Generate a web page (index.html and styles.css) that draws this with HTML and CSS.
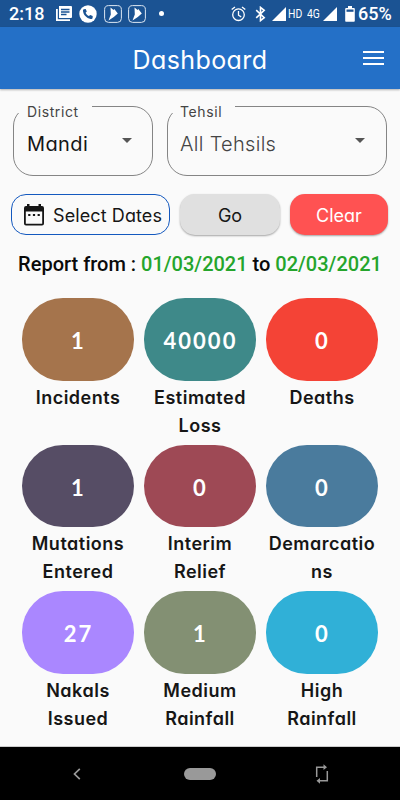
FILE: index.html
```html
<!DOCTYPE html>
<html lang="en">
  <head>
    <meta charset="utf-8">
    <title>Dashboard</title>
    <link rel="stylesheet" href="styles.css">
  </head>

  <body>
    <!-- status bar -->
    <div class="status">
      <span class="time">2:18</span>
      <svg class="news" width="16" height="16" viewBox="0 0 16 16">
        <path fill="#fff" d="M3 0h12a1 1 0 0 1 1 1v10a1 1 0 0 1-1 1H3z"/>
        <path fill="none" stroke="#fff" stroke-width="1.8" d="M.9 3v11.1H14"/>
        <path stroke="#1b5393" stroke-width="1.3" d="M5 3.500h8.500M5 6h8.500M5 8.500h5.500"/>
      </svg>
      <svg class="phone" width="18" height="18" viewBox="0 0 18 18">
        <circle cx="9" cy="9" r="8.700" fill="#fff"/>
        <path fill="#1b5393" d="M4.800 4.200l1.900-.3 1.100 2.600-1.200 1.200c.7 1.500 1.800 2.600 3.300 3.400l1.300-1.200 2.500 1.100-.1 1.900c-.2.900-1.200 1.200-2 1C7.500 13.200 4.300 9.700 4 6c-.1-.8.100-1.600.8-1.800z"/>
      </svg>
      <svg class="app" width="18" height="18" viewBox="0 0 18 18">
        <rect x=".6" y=".6" width="16.800" height="16.800" rx="4" fill="none" stroke="#dce6f2"/>
        <path fill="#fff" d="M6.500 2.500l3 2.500.8-1 3.500 4.500-4 3.500-5.300 3.500 2.300-6z"/>
      </svg>
      <svg class="app" width="18" height="18" viewBox="0 0 18 18">
        <rect x=".6" y=".6" width="16.800" height="16.800" rx="4" fill="none" stroke="#dce6f2"/>
        <path fill="#fff" d="M6.500 2.500l3 2.500.8-1 3.500 4.500-4 3.500-5.300 3.500 2.300-6z"/>
      </svg>
      <span class="dot"></span>

      <svg class="alarm" width="15" height="16" viewBox="0 0 15 16" fill="none" stroke="#fff" stroke-width="1.300">
        <circle cx="7.500" cy="8.700" r="5.800"/>
        <path d="M7.500 5v4.200l2.700 1.700M.7 3.600L4 .9M14.300 3.600L11 .9"/>
      </svg>
      <svg class="bluetooth" width="11" height="16" viewBox="0 0 11 16" fill="none" stroke="#fff" stroke-width="1.600">
        <path d="M1.200 4.200l8 7.400-3.700 3V1.400l3.700 3-8 7.400"/>
      </svg>
      <svg class="signal" width="14" height="14" viewBox="0 0 14 14"><path fill="#fff" d="M14 0v14H0z"/></svg>
      <span class="net">HD</span>
      <span class="net net4g">4G</span>
      <svg class="signal2" width="14" height="14" viewBox="0 0 14 14"><path fill="#fff" d="M14 0v14H0z"/></svg>
      <svg class="battery" width="10" height="16" viewBox="0 0 10 16">
        <path fill="#fff" d="M3 0h4v2h1.700c.7 0 1.100.5 1.100 1.100v11.600c0 .7-.5 1.100-1.100 1.100H1.300c-.7 0-1.100-.5-1.100-1.100V3.100C.2 2.500.7 2 1.300 2H3z"/>
        <path fill="#1b5393" d="M1.500 3.500h7v2.300h-7z"/>
      </svg>
      <span class="percent">65%</span>
    </div>

    <!-- app bar -->
    <header class="appbar">
      <h1>Dashboard</h1>
      <span class="menu"></span>
    </header>

    <main>
      <div class="filters">
        <fieldset class="district">
          <legend>District</legend>
          <span class="value">Mandi</span>
          <span class="arrow"></span>
        </fieldset>
        <fieldset class="tehsil">
          <legend>Tehsil</legend>
          <span class="value">All Tehsils</span>
          <span class="arrow"></span>
        </fieldset>
      </div>

      <div class="buttons">
        <button class="dates">
          <svg width="20" height="22" viewBox="0 0 20 22">
            <path fill="#161616" fill-rule="evenodd" d="M3 0h2.500v2h9V0H17v2h1a2 2 0 0 1 2 2v15.500a2 2 0 0 1-2 2H2a2 2 0 0 1-2-2V4a2 2 0 0 1 2-2h1zM1.800 7.500v12.200h16.400V7.500z"/>
            <path fill="#161616" d="M4.200 10h2.200v2H4.200zM8.900 10h2.200v2H8.900zM13.600 10h2.200v2h-2.200z"/>
          </svg>
          <span>Select Dates</span>
        </button>
        <button class="go">Go</button>
        <button class="clear">Clear</button>
      </div>

      <p class="report">Report from : <b>01/03/2021</b> to <b>02/03/2021</b></p>

      <div class="grid">
        <div class="tile"><div class="pill brown">1</div><p>Incidents</p></div>
        <div class="tile"><div class="pill teal">40000</div><p>Estimated Loss</p></div>
        <div class="tile"><div class="pill red">0</div><p>Deaths</p></div>
        <div class="tile"><div class="pill plum">1</div><p>Mutations Entered</p></div>
        <div class="tile"><div class="pill wine">0</div><p>Interim Relief</p></div>
        <div class="tile"><div class="pill steel">0</div><p>Demarcatio<br>ns</p></div>
        <div class="tile"><div class="pill violet">27</div><p>Nakals Issued</p></div>
        <div class="tile"><div class="pill olive">1</div><p>Medium Rainfall</p></div>
        <div class="tile"><div class="pill cyan">0</div><p>High Rainfall</p></div>
      </div>
    </main>

    <!-- android navigation -->
    <nav>
      <svg width="8" height="12" viewBox="0 0 8 12" fill="none" stroke="#999" stroke-width="1.700"><path d="M6.800.8L1.500 6l5.300 5.200"/></svg>
      <span class="home"></span>
      <svg width="14" height="20" viewBox="0 0 14 20">
        <path fill="none" stroke="#999" stroke-width="1.500" d="M1.700 13V3.200H9M12.300 7v9.800H5"/>
        <path fill="#999" d="M8.500.3l3.500 2.900-3.500 2.900zM5 13.900l-3.500 2.900L5 19.700z"/>
      </svg>
    </nav>
  </body>
</html>
```

FILE: styles.css
```css
body {
    margin: 0;
    height: 800px;
    display: flex;
    flex-direction: column;
    background-color: #fafafa;
    font-family: Inter, Lato, sans-serif;
    font-feature-settings: "cv11";
    color: #161616;
    }

/* status bar */
.status {
    height: 27px;
    background-color: #1b5393;
    color: white;
    display: flex;
    align-items: center;
    font-family: Roboto, sans-serif;
    }
.time {
    width: 47px;
    padding-left: 9px;
    font-size: 18px;
    font-weight: 500;
    }
.phone {
    margin-left: 7px;
    }
.app {
    margin-left: 6px;
    }
.phone + .app {
    margin-left: 7px;
    }
.dot {
    width: 5px;
    height: 5px;
    margin-left: 13px;
    border-radius: 50%;
    background-color: white;
    }
.alarm {
    margin-left: auto;
    }
.bluetooth {
    margin-left: 9px;
    }
.signal {
    margin-left: 6px;
    }
.net {
    width: 14px;
    margin-left: 2px;
    font-size: 13px;
    transform: scaleX(.8);
    transform-origin: left;
    }
.net4g {
    margin-left: 5px;
    }
.signal2 {
    margin-left: 2px;
    }
.battery {
    margin-left: 8px;
    }
.percent {
    width: 42px;
    margin-left: 3px;
    font-size: 18px;
    font-weight: 500;
    }

/* app bar */
.appbar {
    height: 62px;
    padding: 0 16px;
    background-color: #2470c7;
    box-shadow: 0 1px 2px rgba(0,0,0,.3);
    display: grid;
    grid-template-columns: 21px 1fr 21px;
    align-items: center;
    }
h1 {
    grid-column: 2;
    margin: 3px 0 0;
    color: white;
    font-size: 25px;
    font-weight: 400;
    letter-spacing: .4px;
    text-align: center;
    }
.menu {
    height: 10px;
    border-top: 2px solid white;
    border-bottom: 2px solid white;
    background: linear-gradient(white, white) 0 4px / 100% 2px no-repeat;
    }

/* selects */
.filters {
    display: flex;
    gap: 14px;
    padding: 10px 13px 0;
    }
fieldset {
    box-sizing: border-box;
    height: 77px;
    margin: 0;
    padding: 0 20px 0 4px;
    border: 1px solid #858585;
    border-radius: 20px;
    display: flex;
    justify-content: space-between;
    }
.district {
    width: 140px;
    }
.tehsil {
    width: 220px;
    padding-left: 3px;
    padding-right: 21px;
    }
legend {
    height: 14px;
    line-height: 25px;
    padding: 0 13px 0 9px;
    font-size: 14px;
    letter-spacing: .6px;
    color: #444;
    }
.value {
    padding: 19px 0 0 9px;
    font-size: 20px;
    font-weight: 400;
    line-height: 24px;
    letter-spacing: .4px;
    }
.tehsil .value {
    color: #444;
    font-weight: 350;
    letter-spacing: .3px;
    }
.arrow {
    margin-top: 25px;
    width: 0;
    height: 0;
    border: 5.5px solid transparent;
    border-top-color: #555;
    }

/* buttons */
.buttons {
    display: flex;
    gap: 10px;
    padding: 18px 12px 0 11px;
    }
button {
    box-sizing: border-box;
    height: 41px;
    padding: 2px 0 0;
    border: none;
    border-radius: 15px;
    font: inherit;
    font-size: 18px;
    color: #161616;
    }
.dates {
    width: 159px;
    border: 1px solid #1459bf;
    background-color: transparent;
    display: flex;
    align-items: center;
    padding-left: 12px;
    font-weight: 370;
    letter-spacing: .1px;
    }
.dates svg {
    margin: -1px 9px 0 0;
    }
.go, .clear {
    width: 100px;
    background-color: #e0e0e0;
    box-shadow: 0 1px 2px rgba(0,0,0,.35);
    }
.clear {
    width: 98px;
    background-color: #ff5252;
    color: white;
    }

.report {
    margin: 16px 0 0;
    font-family: Roboto, sans-serif;
    font-size: 20px;
    line-height: 26px;
    font-weight: 500;
    text-align: center;
    color: #0a0a0a;
    }
.report b {
    font-weight: 500;
    color: #25a52c;
    }

/* tiles */
.grid {
    display: grid;
    grid-template-columns: repeat(3, 112px);
    grid-auto-rows: 146.5px;
    column-gap: 10px;
    justify-content: center;
    margin-top: 21px;
    }
.pill {
    height: 82.5px;
    line-height: 86px;
    border-radius: 41px;
    color: white;
    font-family: Lato, sans-serif;
    font-size: 22px;
    font-weight: 700;
    letter-spacing: 2px;
    text-indent: 1px;
    text-align: center;
    }
.tile p {
    margin: 3px 0 0;
    font-size: 18px;
    font-weight: 600;
    line-height: 28px;
    letter-spacing: .5px;
    text-align: center;
    }
.brown { background-color: #a5744c; }
.teal { background-color: #3e8989; }
.red { background-color: #f44336; }
.plum { background-color: #564d65; }
.wine { background-color: #9e4955; }
.steel { background-color: #4a7b9d; }
.violet { background-color: #aa87ff; }
.olive { background-color: #839073; }
.cyan { background-color: #30b0d7; }

/* android navigation */
nav {
    box-sizing: border-box;
    height: 54px;
    margin-top: auto;
    padding: 0 71px 0 73px;
    background-color: black;
    border-top: 1px solid #ccc;
    display: flex;
    align-items: center;
    justify-content: space-between;
    }
.home {
    width: 32px;
    height: 12px;
    margin-left: 4px;
    border-radius: 6px;
    background-color: #999;
    }
```
